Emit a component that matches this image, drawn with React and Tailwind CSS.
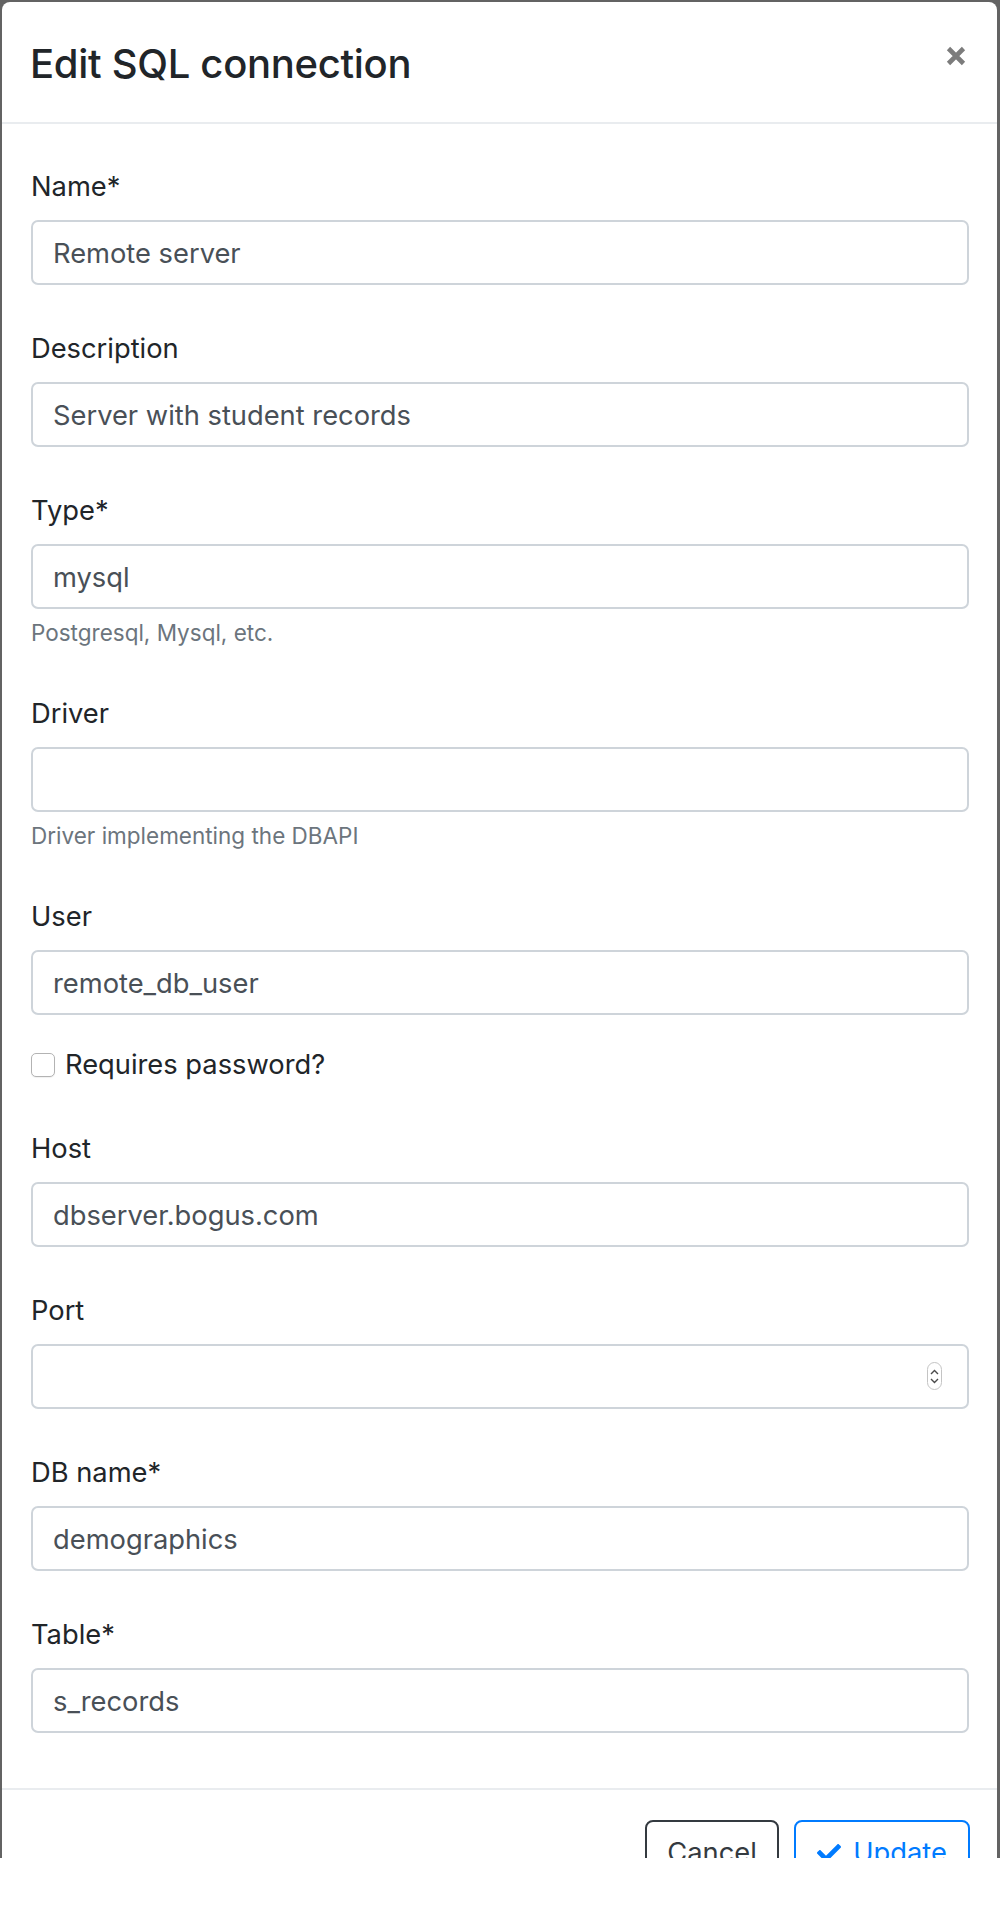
import React from "react";
import { FaCheck } from "react-icons/fa";

const font = { fontFamily: "Inter, 'Noto Sans', 'Liberation Sans', sans-serif" };

function Label({ children }) {
  return (
    <div className="text-[27.3px] leading-[40px] text-[#212529] mb-[13px]">{children}</div>
  );
}

function Input({ value, children }) {
  return (
    <div className="relative h-[65px] border-2 border-[#ced4da] rounded-[7px] bg-white flex items-center pt-[2px] pl-[20px] pr-[19px] text-[27.3px] leading-[40px] text-[#495057]">
      {value}
      {children}
    </div>
  );
}

function Help({ children }) {
  return (
    <div className="mt-[7px] text-[22.5px] leading-[34px] text-[#6c757d]">{children}</div>
  );
}

function Group({ label, value, help, last, children }) {
  return (
    <div className={last ? "" : "mb-[44px]"}>
      <Label>{label}</Label>
      <Input value={value} />
      {help && <Help>{help}</Help>}
      {children}
    </div>
  );
}

export default function App() {
  return (
    <div style={font}>
      <div className="h-[1858px] overflow-hidden bg-[#636363] pt-[2px] pl-[2px] pr-[3px]">
        <div className="bg-white rounded-[8px] flex flex-col">
          {/* Header */}
          <div className="flex items-start justify-between pl-[28px] pr-[29px] pt-[32px] pb-[28px] border-b-2 border-[#e9ecef] h-[122px]">
            <div className="text-[40px] leading-[60px] font-medium text-[#212529] tracking-[-0.3px]">
              Edit SQL connection
            </div>
            <svg width="20" height="20" viewBox="0 0 20 20" className="mt-[12px] mr-[2px]">
              <path d="M2.5 2.5 L17.5 17.5 M17.5 2.5 L2.5 17.5" stroke="#7c7c7c" strokeWidth="4.6" strokeLinecap="butt" />
            </svg>
          </div>

          {/* Body */}
          <div className="pt-[43px] pb-[55px] pl-[29px] pr-[28px]">
            <Group label="Name*" value="Remote server" />
            <Group label="Description" value="Server with student records" />
            <Group label="Type*" value="mysql" help="Postgresql, Mysql, etc." />
            <Group label="Driver" value="" help="Driver implementing the DBAPI" />
            <Group label="User" value="remote_db_user">
              <div className="mt-[30px] flex items-center h-[40px]">
                <div className="w-[24px] h-[24px] border-[1.5px] border-[#b3b3b3] rounded-[5px] bg-white shadow-[0_1px_1px_rgba(0,0,0,0.06)]" />
                <span className="ml-[10px] text-[27.3px] leading-[40px] text-[#212529]">Requires password?</span>
              </div>
            </Group>
            <Group label="Host" value="dbserver.bogus.com" />
            <div className="mb-[44px]">
              <Label>Port</Label>
              <Input value="">
                <div className="absolute right-[25px] top-[16px] w-[15px] h-[28px] rounded-full border border-[#c4c4c4] bg-white flex flex-col items-center justify-center gap-[3px]">
                  <svg width="9" height="6" viewBox="0 0 9 6">
                    <path d="M1 5 L4.5 1.5 L8 5" stroke="#4a4a4a" strokeWidth="1.4" fill="none" />
                  </svg>
                  <svg width="9" height="6" viewBox="0 0 9 6">
                    <path d="M1 1 L4.5 4.5 L8 1" stroke="#4a4a4a" strokeWidth="1.4" fill="none" />
                  </svg>
                </div>
              </Input>
            </div>
            <Group label="DB name*" value="demographics" />
            <Group label="Table*" value="s_records" last />
          </div>

          {/* Footer */}
          <div className="border-t-2 border-[#e9ecef] pt-[30px] pr-[27px] flex justify-end gap-[15px]">
            <div className="w-[134px] h-[65px] border-2 border-[#343a40] rounded-[8px] flex items-center justify-center text-[27.3px] leading-[40px] text-[#343a40]">
              Cancel
            </div>
            <div className="w-[176px] h-[65px] border-2 border-[#007bff] rounded-[8px] flex items-center justify-center gap-[12px] text-[27.3px] leading-[40px] text-[#007bff]">
              <FaCheck size={24} />
              <span>Update</span>
            </div>
          </div>
        </div>
      </div>
    </div>
  );
}
